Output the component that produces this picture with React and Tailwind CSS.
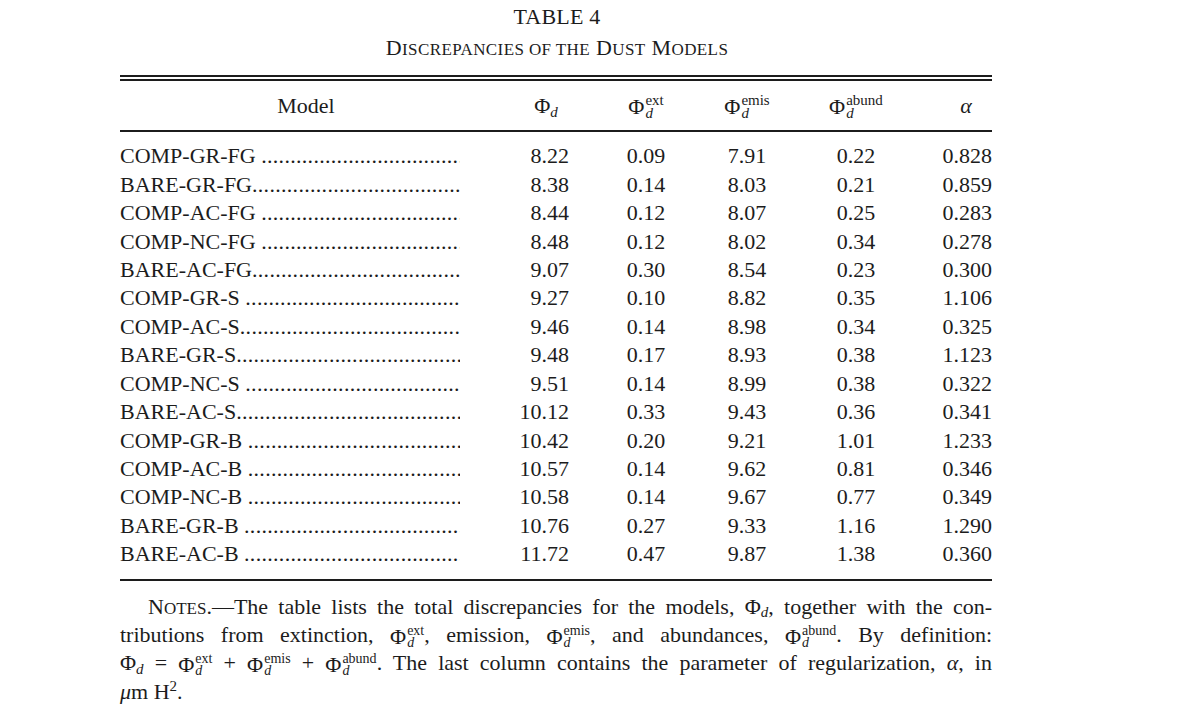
import React from "react";

const rows = [
  ["COMP-GR-FG ", "8.22", "0.09", "7.91", "0.22", "0.828"],
  ["BARE-GR-FG", "8.38", "0.14", "8.03", "0.21", "0.859"],
  ["COMP-AC-FG ", "8.44", "0.12", "8.07", "0.25", "0.283"],
  ["COMP-NC-FG ", "8.48", "0.12", "8.02", "0.34", "0.278"],
  ["BARE-AC-FG", "9.07", "0.30", "8.54", "0.23", "0.300"],
  ["COMP-GR-S ", "9.27", "0.10", "8.82", "0.35", "1.106"],
  ["COMP-AC-S", "9.46", "0.14", "8.98", "0.34", "0.325"],
  ["BARE-GR-S", "9.48", "0.17", "8.93", "0.38", "1.123"],
  ["COMP-NC-S ", "9.51", "0.14", "8.99", "0.38", "0.322"],
  ["BARE-AC-S", "10.12", "0.33", "9.43", "0.36", "0.341"],
  ["COMP-GR-B ", "10.42", "0.20", "9.21", "1.01", "1.233"],
  ["COMP-AC-B ", "10.57", "0.14", "9.62", "0.81", "0.346"],
  ["COMP-NC-B ", "10.58", "0.14", "9.67", "0.77", "0.349"],
  ["BARE-GR-B ", "10.76", "0.27", "9.33", "1.16", "1.290"],
  ["BARE-AC-B ", "11.72", "0.47", "9.87", "1.38", "0.360"],
];

const cols = "grid grid-cols-[380px_96px_100px_102px_116px_78px]";
const dots = ".".repeat(80);

// Φ with stacked superscript / italic d subscript
function Phi({ sup, small }) {
  return (
    <span className="inline-flex items-center align-middle">
      <span>Φ</span>
      <span
        className={`inline-flex flex-col items-start ml-[1px] ${
          small ? "text-[14px] leading-[12px]" : "text-[15px] leading-[13px]"
        }`}
      >
        <span>{sup}</span>
        <span className="italic">d</span>
      </span>
    </span>
  );
}

function PhiD() {
  return (
    <span>
      Φ<sub className="italic text-[15px]">d</sub>
    </span>
  );
}

export default function App() {
  return (
    <div
      className="w-[1200px] h-[708px] bg-white text-[#1c1c1c] overflow-hidden"
      style={{ fontFamily: '"Liberation Serif", "Times New Roman", serif' }}
    >
      <div className="w-[872px] ml-[120px] flex flex-col">
        <div className="h-[34px] leading-[34px] text-center text-[22px] pl-[2px] tracking-[0.2px]">
          TABLE 4
        </div>
        <div className="h-[28px] leading-[28px] text-center text-[22px] pl-[2px] tracking-[0.4px]">
          D<span className="text-[17px]">ISCREPANCIES OF THE</span> D
          <span className="text-[17px]">UST</span> M
          <span className="text-[17px]">ODELS</span>
        </div>

        <div className="mt-[13px] h-[2px] bg-[#1c1c1c]" />
        <div className="mt-[2px] h-[2px] bg-[#1c1c1c]" />

        <div className={`${cols} h-[49px] items-center text-[22px]`}>
          <div className="text-center pr-[8px]">Model</div>
          <div className="text-center pr-[4px]">
            <PhiD />
          </div>
          <div className="text-center">
            <Phi sup="ext" />
          </div>
          <div className="text-center">
            <Phi sup="emis" />
          </div>
          <div className="text-center">
            <Phi sup="abund" />
          </div>
          <div className="pl-[26px] text-center italic">α</div>
        </div>

        <div className="h-[2px] bg-[#1c1c1c]" />

        <div className="pt-[10px] pb-[10px] text-[22px]">
          {rows.map((r) => (
            <div key={r[0]} className={`${cols} h-[28.45px] items-center leading-[26px]`}>
              <div className="flex w-[340px] whitespace-pre">
                <span>{r[0]}</span>
                <span className="flex-1 overflow-hidden tracking-[0.3px]">{dots}</span>
              </div>
              <div className="text-right pr-[27px]">{r[1]}</div>
              <div className="text-center">{r[2]}</div>
              <div className="text-center">{r[3]}</div>
              <div className="text-center">{r[4]}</div>
              <div className="text-right">{r[5]}</div>
            </div>
          ))}
        </div>

        <div className="h-[2px] bg-[#1c1c1c]" />

        <div className="mt-[13px] text-[22px] leading-[26.6px] text-justify [text-align-last:justify]">
          <div className="pl-[28px]">
            N<span className="text-[17px]">OTES</span>.—The table lists the total discrepancies for
            the models, <PhiD />, together with the con-
          </div>
          <div>
            tributions from extinction, <Phi sup="ext" small />, emission,{" "}
            <Phi sup="emis" small />, and abundances, <Phi sup="abund" small />. By definition:
          </div>
          <div className="[word-spacing:-1px]">
            <PhiD /> = <Phi sup="ext" small /> + <Phi sup="emis" small /> +{" "}
            <Phi sup="abund" small />. The last column contains the parameter of regularization,{" "}
            <span className="italic">α</span>, in
          </div>
          <div className="[text-align-last:left]">
            <span className="italic">μ</span>m H<sup className="text-[15px]">2</sup>.
          </div>
        </div>
      </div>
    </div>
  );
}
